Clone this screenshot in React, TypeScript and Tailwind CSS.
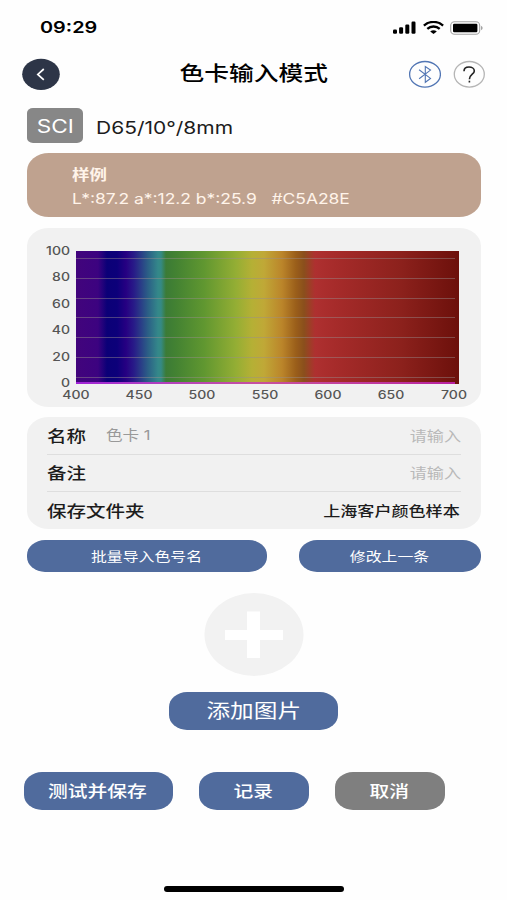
import type { ReactNode } from "react"

const yLabels = ["100", "80", "60", "40", "20", "0"]
const xLabels = ["400", "450", "500", "550", "600", "650", "700"]

// the whole screen uses wide glyphs, so every text is stretched sideways
function Wide({ className, children }: { className: string; children: ReactNode }) {
  return <span className={`block whitespace-nowrap scale-x-[1.22] ${className}`}>{children}</span>
}

function StatusBar() {
  return (
    <div className="flex h-[50px] items-center justify-between pt-[5px] pr-[23px] pl-[40px]">
      <Wide className="origin-left text-[16.3px] leading-none font-semibold">09:29</Wide>
      <div className="flex items-center">
        <svg width="23" height="13" viewBox="0 0 23 13">
          <rect x="0" y="8.6" width="4" height="4.2" rx="1.2" />
          <rect x="6.1" y="6.3" width="4" height="6.5" rx="1.2" />
          <rect x="12.3" y="3.6" width="4" height="9.2" rx="1.2" />
          <rect x="18.5" y="0.6" width="4" height="12.2" rx="1.2" />
        </svg>
        <svg className="ml-[7px]" width="21" height="13" viewBox="0 0 21 13" fill="none" stroke="#000" strokeWidth="2.3">
          <path d="M0.9 4.6C6.2-0.3 14.8-0.3 20.1 4.6" />
          <path d="M4.3 7.9C7.8 4.7 13.2 4.7 16.7 7.9" />
          <path d="M7.2 10.4C9.2 8.8 11.8 8.8 13.8 10.4L10.5 13Z" fill="#000" stroke="none" />
        </svg>
        <svg className="ml-[6px]" width="34" height="14" viewBox="0 0 34 14">
          <rect x="0.7" y="0.7" width="29" height="12.6" rx="3.8" fill="none" stroke="#a3a3a3" strokeWidth="1.1" />
          <rect x="3" y="2.7" width="24.4" height="8.6" rx="1.2" />
          <path d="M31.2 4.8C33 5.6 33 8.4 31.2 9.2Z" fill="#8f8f8f" />
        </svg>
      </div>
    </div>
  )
}

function Header() {
  return (
    <header className="grid h-[48px] grid-cols-[1fr_auto_1fr] items-center px-[22px]">
      <svg width="38" height="32" viewBox="0 0 38 32">
        <ellipse cx="19" cy="16.3" rx="18.8" ry="15.6" fill="#2d3547" />
        <path d="M21.8 11L15.8 16.4L21.8 21.8" fill="none" stroke="#fff" strokeWidth="1.7" />
      </svg>
      <Wide className="pt-px text-[20.3px] leading-none font-medium">色卡输入模式</Wide>
      <div className="flex justify-end gap-[12px]">
        <svg width="33" height="28" viewBox="0 0 33 28" fill="none" stroke="#5276b4">
          <ellipse cx="17" cy="14.3" rx="15.4" ry="12.8" strokeWidth="1.3" />
          <path d="M11.1 9.7L22.5 18.4L17.3 22.3V6.5L22.5 10.1L11.1 18.7" strokeWidth="1.1" />
        </svg>
        <svg width="32" height="28" viewBox="0 0 32 28" fill="none">
          <ellipse cx="16.3" cy="14.3" rx="15" ry="12.8" stroke="#b5b5b5" strokeWidth="1.3" />
          <path d="M11 11.2C11 8.6 13.1 7 16 7C18.9 7 21.3 8.6 21.3 10.9C21.3 14.2 16.4 14.2 16.4 19.2" stroke="#222" strokeWidth="1.6" />
          <path d="M16.4 20.7V22.5" stroke="#222" strokeWidth="1.6" />
        </svg>
      </div>
    </header>
  )
}

function SpectrumChart() {
  return (
    <section className="mt-[11px] flex h-[179px] flex-col rounded-[22px/18px] bg-[#f1f1f1] pt-[23px] text-[11.5px] leading-[11px] font-medium text-[#555]">
      <div className="flex h-[134px]">
        <div className="-mt-[5px] flex h-[143px] w-[43px] flex-col justify-between">
          {yLabels.map((label) => (
            <Wide key={label} className="origin-right text-right">{label}</Wide>
          ))}
        </div>
        <div className="ml-[6px] flex h-[133px] w-[383px] flex-col bg-[linear-gradient(90deg,#42047c_0px,#3c0380_22px,#0b0077_31px,#0c007a_41px,#260082_50px,#281b88_58px,#2b5f86_72px,#34888a_82px,#358a84_85px,#3b7b36_90px,#438232_100px,#609730_128px,#94ae34_160px,#b5b035_176px,#c0a837_188px,#bb852a_206px,#9a5e1a_220px,#8a4f1c_228px,#ae3030_239px,#a62b2a_260px,#8c211c_325px,#6c100b_383px)]">
          <div className="flex h-[131px] w-[379px] shrink-0 flex-col justify-between pt-[7px] pb-[4px]">
            {[0, 1, 2, 3, 4, 5, 6].map((line) => (
              <div key={line} className="h-px bg-[#9a8f8f]/45" />
            ))}
          </div>
          <div className="h-[2px] w-[379px] shrink-0 bg-linear-to-r from-[#a020d8] via-[#c8509c] to-[#b81fa0]" />
        </div>
      </div>
      <div className="ml-[28px] flex w-[422px] pt-[5px]">
        {xLabels.map((label) => (
          <Wide key={label} className="mr-[21px] w-[42px] shrink-0 text-center">{label}</Wide>
        ))}
      </div>
    </section>
  )
}

function Form() {
  return (
    <section className="mt-[10px] h-[112px] rounded-[22px/18px] bg-[#f1f1f1] px-[20px] text-[16px] leading-none font-medium text-[#1c1c1c]">
      <div className="flex h-[38px] items-center border-b border-[#dedede]">
        <Wide className="origin-left">名称</Wide>
        <Wide className="ml-[27px] origin-left text-[13.6px] font-normal text-[#999]">色卡 1</Wide>
        <Wide className="ml-auto origin-right text-[14px] font-normal text-[#b9b9b9]">请输入</Wide>
      </div>
      <div className="flex h-[37px] items-center border-b border-[#dedede]">
        <Wide className="origin-left">备注</Wide>
        <Wide className="ml-auto origin-right text-[14px] font-normal text-[#b9b9b9]">请输入</Wide>
      </div>
      <div className="flex h-[37px] items-center">
        <Wide className="origin-left">保存文件夹</Wide>
        <Wide className="ml-auto origin-right pr-px text-[14px]">上海客户颜色样本</Wide>
      </div>
    </section>
  )
}

function Button({ className, children }: { className: string; children: ReactNode }) {
  return (
    <button className={`flex items-center justify-center text-white leading-none ${className}`}>
      <Wide className="origin-center">{children}</Wide>
    </button>
  )
}

export default function App() {
  return (
    <div className="flex h-[900px] w-[507px] flex-col overflow-hidden bg-[#fefefe] font-['Inter','Noto_Sans_CJK_SC',sans-serif] text-black">
      <StatusBar />
      <Header />
      <main className="pr-[26px] pl-[27px]">
        <div className="mt-[10px] flex h-[35px] items-center">
          <div className="flex h-[35px] w-[56px] items-center justify-center rounded-[6px/5px] bg-[#878787] text-white">
            <Wide className="pt-px text-[18.5px] leading-none">SCI</Wide>
          </div>
          <Wide className="ml-[13px] origin-left pt-[4px] text-[17.2px] leading-none text-[#1c1c1c]">D65/10°/8mm</Wide>
        </div>
        <section className="mt-[10px] flex h-[64px] flex-col justify-center gap-[9px] rounded-[22px/18px] bg-[#bfa28f] pt-[4px] pl-[45px] text-[14.3px] leading-none text-[#fff4ea]">
          <Wide className="origin-left font-bold">样例</Wide>
          <Wide className="origin-left whitespace-pre">L*:87.2 a*:12.2 b*:25.9   #C5A28E</Wide>
        </section>
        <SpectrumChart />
        <Form />
        <div className="mt-[11px] flex justify-between">
          <Button className="h-[32px] w-[240px] rounded-[18px/15px] bg-[#506b9d] text-[13px]">批量导入色号名</Button>
          <Button className="h-[32px] w-[182px] rounded-[18px/15px] bg-[#506b9d] text-[13px]">修改上一条</Button>
        </div>
      </main>
      <div className="mt-[21px] flex flex-col items-center">
        <svg width="100" height="84" viewBox="0 0 100 84">
          <ellipse cx="50" cy="41.5" rx="49.5" ry="41.5" fill="#f2f2f2" />
          <path d="M43 18.5H56V37H79V47H56V65H43V47H21V37H43Z" fill="#fff" />
        </svg>
        <Button className="mt-[15px] h-[38px] w-[169px] rounded-[18px/15px] bg-[#506b9d] pt-[2px] text-[19.4px]">添加图片</Button>
      </div>
      <div className="mt-[42px] flex gap-[26px] pl-[24px] text-[16.2px] font-medium">
        <Button className="h-[38px] w-[149px] rounded-[18px/15px] bg-[#506b9d] pr-[2px]">测试并保存</Button>
        <Button className="h-[38px] w-[110px] rounded-[18px/15px] bg-[#506b9d] pr-[2px]">记录</Button>
        <Button className="h-[38px] w-[110px] rounded-[18px/15px] bg-[#7f7f7f] pr-[2px]">取消</Button>
      </div>
      <div className="mx-auto mt-auto mb-[8px] h-[6px] w-[180px] rounded-full bg-black" />
    </div>
  )
}
